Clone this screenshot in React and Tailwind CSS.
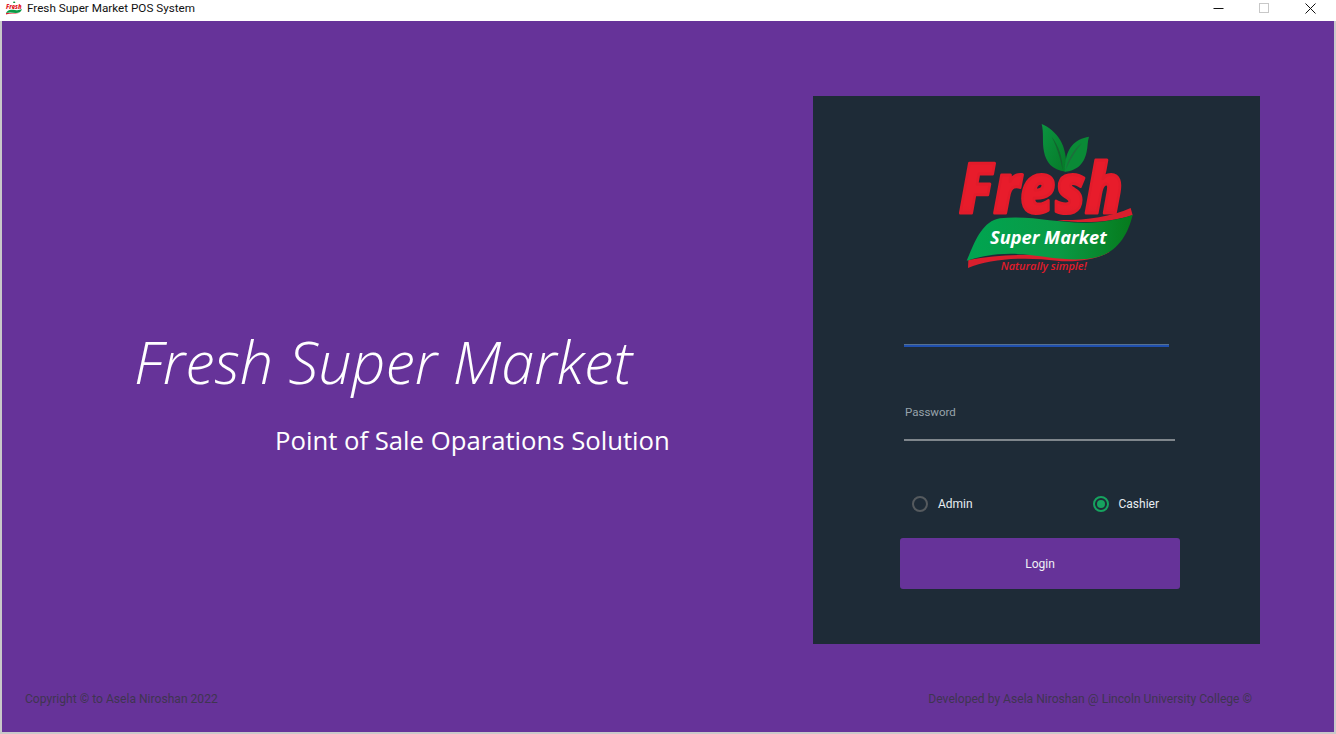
import React from "react";

const small = "font-['Roboto','Open_Sans',sans-serif]";

// logo drawn in the coordinates of a 3x crop, text stays real svg text
const Logo = () => (
  <svg width="210" height="170" viewBox="0 0 630 510" className="block ml-[40px]">
    <defs>
      <linearGradient id="banner" x1="0" y1="0" x2="1" y2="0">
        <stop offset="0" stopColor="#00a551" />
        <stop offset="0.55" stopColor="#0a9a45" />
        <stop offset="1" stopColor="#067a1c" />
      </linearGradient>
      <linearGradient id="leaf" x1="0" y1="0" x2="1" y2="1">
        <stop offset="0" stopColor="#0b9440" />
        <stop offset="1" stopColor="#067a28" />
      </linearGradient>
      <linearGradient id="red" x1="0" y1="0" x2="0" y2="1">
        <stop offset="0" stopColor="#e81c2b" />
        <stop offset="0.7" stopColor="#e81c2b" />
        <stop offset="1" stopColor="#cf1f2c" />
      </linearGradient>
    </defs>
    <path d="M305 42 C350 62 385 105 378 185 C335 180 318 155 312 125 C306 95 312 70 305 42 Z" fill="url(#leaf)" />
    <path d="M335 80 C358 110 368 145 368 180 C360 140 350 110 335 80 Z" fill="#14632f" />
    <path d="M447 80 C405 88 375 110 374 185 C420 182 435 150 440 125 C444 108 442 95 447 80 Z" fill="#0a8a36" />
    <path d="M425 100 C398 122 384 150 376 182 C390 150 405 125 425 100 Z" fill="#1f6d3c" />
    <text x="58" y="310" fontFamily="Open Sans" fontWeight="800" fontStyle="italic" fontSize="208" fill="url(#red)" stroke="#e21b2a" strokeWidth="9" strokeLinejoin="round" textLength="490" lengthAdjust="spacingAndGlyphs">Fresh</text>
    <path d="M350 330 C430 332 510 322 572 294 L578 316 C500 340 420 340 350 330 Z" fill="#d91f2d" />
    <path d="M85 450 L84 474 C150 445 260 440 350 452 C400 458 470 450 510 425 C420 445 240 420 85 450 Z" fill="#d91f2d" />
    <path d="M80 452 C105 395 125 335 180 325 C270 315 350 340 440 338 C490 336 540 328 578 314 C565 370 535 425 470 442 C400 458 320 440 250 433 C190 428 130 435 80 452 Z" fill="url(#banner)" />
    <text x="150" y="401" fontFamily="Open Sans" fontWeight="700" fontStyle="italic" fontSize="52" fill="#ffffff" textLength="350" lengthAdjust="spacingAndGlyphs">Super Market</text>
    <text x="182" y="480" fontFamily="Open Sans" fontWeight="600" fontStyle="italic" fontSize="32" fill="#e21b2a" textLength="258" lengthAdjust="spacingAndGlyphs">Naturally simple!</text>
  </svg>
);

const AppIcon = () => (
  <svg width="18" height="14" viewBox="0 0 18 14" className="block mt-[1px] overflow-visible">
    <path d="M9 0 L10.500 2 L8 2 Z" fill="#0a8a36" />
    <text x="1" y="8" fontFamily="Open Sans" fontWeight="800" fontStyle="italic" fontSize="7.500" fill="#e21b2a" textLength="15.500" lengthAdjust="spacingAndGlyphs">Fresh</text>
    <path d="M1 12 C3 8 6 8.500 10 9 C13 9.500 15 9 17 8 C16 11 14 12 11 12 C7 11.500 4 11 1 12 Z" fill="#0a9a45" />
    <path d="M1 12 L1 13.500 C5 12 9 13 14 12 Z" fill="#d91f2d" />
  </svg>
);

const WinButton = ({ children }) => (
  <div className="w-[46px] h-[16px] flex items-center justify-center">{children}</div>
);

const TitleBar = () => (
  <div className="h-[21px] bg-white flex items-start pl-[5px] pr-[3px] shrink-0">
    <AppIcon />
    <span className="ml-[4px] text-[11.700px] leading-[16px] text-[#111] flex-1">Fresh Super Market POS System</span>
    <WinButton>
      <svg width="11" height="11" viewBox="0 0 11 11"><path d="M0.500 5.500 H10.500" stroke="#111" /></svg>
    </WinButton>
    <WinButton>
      <svg width="11" height="11" viewBox="0 0 11 11"><rect x="0.500" y="0.500" width="9" height="9" fill="none" stroke="#c8c8c8" /></svg>
    </WinButton>
    <WinButton>
      <svg width="11" height="11" viewBox="0 0 11 11"><path d="M0.500 0.500 L10.500 10.500 M10.500 0.500 L0.500 10.500" stroke="#111" /></svg>
    </WinButton>
  </div>
);

const Radio = ({ label, checked }) => (
  <div className="flex items-center">
    <span
      className={
        checked
          ? "w-4 h-4 rounded-full border-2 border-[#16a35f] flex items-center justify-center"
          : "w-4 h-4 rounded-full border-2 border-[#555a5e]"
      }
    >
      {checked && <span className="w-2 h-2 rounded-full bg-[#16a35f]" />}
    </span>
    <span className="ml-[10px] text-[12px] leading-[16px] text-[#e8eef2]">{label}</span>
  </div>
);

const LoginPanel = () => (
  <div className="w-[447px] h-[548px] bg-[#1e2b37] flex flex-col items-start pl-[87px] pt-[14px] shrink-0">
    <Logo />
    {/* usuario, campo activo */}
    <div className="ml-[4px] mt-[64px] w-[265px] h-[3px] bg-[#1f4fae] border-t border-[#56708f]" />
    <div className="ml-[4px] mt-[52px] w-[271px] border-b-2 border-[#7f868c] pl-[1px] h-[42px]">
      <input
        placeholder="Password"
        className="w-full h-[20px] bg-transparent outline-none text-[11.500px] text-white placeholder:text-[#98a3ab]"
      />
    </div>
    <div className="mt-[55px] ml-[12px] w-[247px] flex justify-between">
      <Radio label="Admin" />
      <Radio label="Cashier" checked />
    </div>
    <button className="mt-[26px] w-[280px] h-[51px] rounded-[3px] bg-[#663399] text-[12px] text-[#f0f0f5]">Login</button>
  </div>
);

const App = () => {
  return (
    <div className={`w-[1336px] h-[734px] overflow-hidden bg-[#c9c9c9] flex flex-col ${small}`}>
      <TitleBar />
      <div className="mx-[2px] h-[711px] bg-[#663399] flex flex-col">
        <div className="flex justify-between pt-[75px] pr-[74px]">
          <div className="pt-[229px] pl-[132px] font-['Open_Sans',sans-serif]">
            <h1 className="text-[59.300px] leading-[72px] font-light italic text-white whitespace-nowrap">Fresh Super Market</h1>
            <p className="mt-[27px] ml-[141px] text-[25.700px] leading-[34px] text-white whitespace-nowrap">Point of Sale Oparations Solution</p>
          </div>
          <LoginPanel />
        </div>
        <div className="mt-[47px] pl-[23px] pr-[82px] flex justify-between text-[12.100px] leading-[16px] text-[#3f3550]">
          <span>Copyright © to Asela Niroshan 2022</span>
          <span>Developed by Asela Niroshan @ Lincoln University College ©</span>
        </div>
      </div>
    </div>
  );
};

export default App;
